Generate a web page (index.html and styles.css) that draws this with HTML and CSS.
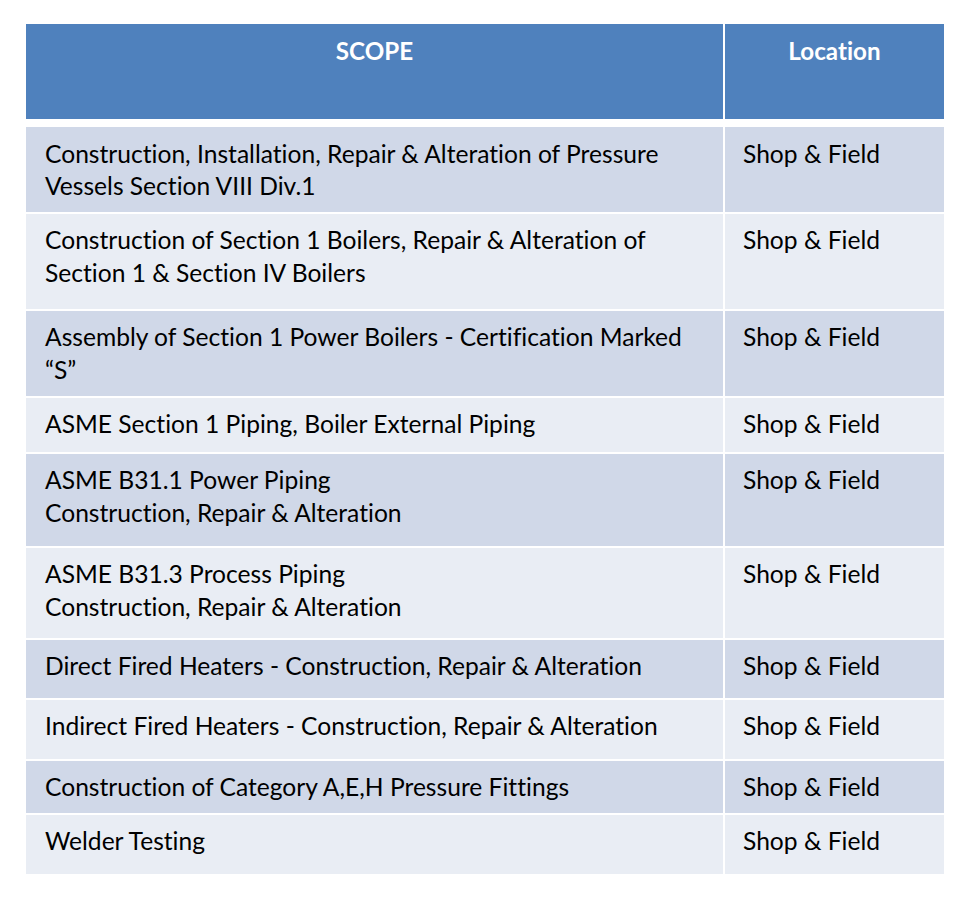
FILE: index.html
```html
<!DOCTYPE html>
<html lang="en">
<head>
<meta charset="utf-8">
<title>Scope</title>
<link rel="stylesheet" href="styles.css">
</head>
<body>
<div class="scope-table">
  <div class="head">
    <div class="hcell">SCOPE</div>
    <div class="hcell">Location</div>
  </div>
  <div class="body">
    <div class="cell odd">Construction, Installation, Repair &amp; Alteration of Pressure<br>Vessels Section VIII Div.1</div>
    <div class="cell odd">Shop &amp; Field</div>
    <div class="cell even">Construction of Section 1 Boilers, Repair &amp; Alteration of<br>Section 1 &amp; Section IV Boilers</div>
    <div class="cell even">Shop &amp; Field</div>
    <div class="cell odd">Assembly of Section 1 Power Boilers - Certification Marked<br>“S”</div>
    <div class="cell odd">Shop &amp; Field</div>
    <div class="cell even">ASME Section 1 Piping, Boiler External Piping</div>
    <div class="cell even">Shop &amp; Field</div>
    <div class="cell odd">ASME B31.1 Power Piping<br>Construction, Repair &amp; Alteration</div>
    <div class="cell odd">Shop &amp; Field</div>
    <div class="cell even">ASME B31.3 Process Piping<br>Construction, Repair &amp; Alteration</div>
    <div class="cell even">Shop &amp; Field</div>
    <div class="cell odd">Direct Fired Heaters - Construction, Repair &amp; Alteration</div>
    <div class="cell odd">Shop &amp; Field</div>
    <div class="cell even">Indirect Fired Heaters - Construction, Repair &amp; Alteration</div>
    <div class="cell even">Shop &amp; Field</div>
    <div class="cell odd">Construction of Category A,E,H Pressure Fittings</div>
    <div class="cell odd">Shop &amp; Field</div>
    <div class="cell even">Welder Testing</div>
    <div class="cell even">Shop &amp; Field</div>
  </div>
</div>
</body>
</html>
```
FILE: styles.css
```css
html, body {
  margin: 0;
  padding: 0;
  background: #ffffff;
}
body {
  font-family: "Lato", "Open Sans", sans-serif;
  font-size: 24.6px;
  line-height: 32.5px;
  color: #000000;
  font-variant-ligatures: none;
}
.scope-table {
  display: flex;
  flex-direction: column;
  gap: 8px;
  width: 918px;
  margin: 24px 0 0 26px;
}
.head,
.body {
  display: grid;
  grid-template-columns: 697px 219px;
  column-gap: 2px;
  row-gap: 2px;
}
.head {
  grid-template-rows: 95px;
}
.body {
  grid-template-rows: 84.7px 95px 85px 54px 92px 90px 58px 59px 52px 59px;
}
.hcell {
  background: #4f81bd;
  color: #ffffff;
  font-weight: 700;
  font-size: 24.2px;
  text-align: center;
  padding-top: 10.5px;
}
.cell {
  padding: 10.8px 10px 0 19px;
  white-space: nowrap;
}
.cell:nth-child(2n) {
  padding-left: 18px;
}
.odd {
  background: #d0d8e8;
}
.even {
  background: #e9edf4;
}
```
